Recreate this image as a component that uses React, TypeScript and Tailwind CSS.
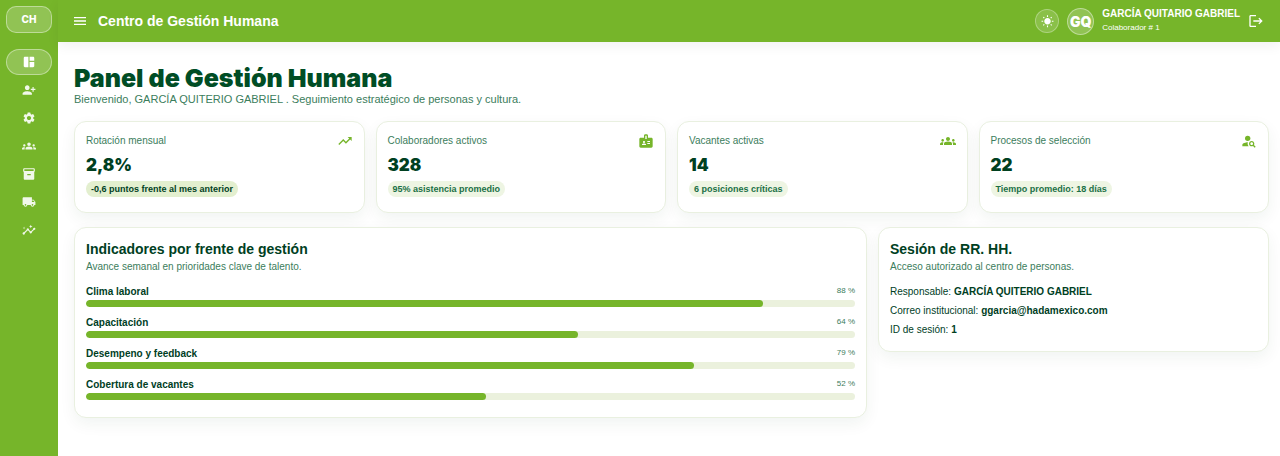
import type { ReactNode } from "react";
import type { IconType } from "react-icons";
import {
  MdBadge,
  MdGroups,
  MdInsights,
  MdInventory2,
  MdLocalShipping,
  MdLogout,
  MdMenu,
  MdPersonAddAlt1,
  MdPersonSearch,
  MdSettings,
  MdSpaceDashboard,
  MdTrendingUp,
  MdWbSunny,
} from "react-icons/md";

const navItems: { label: string; icon: IconType }[] = [
  { label: "Panel", icon: MdSpaceDashboard },
  { label: "Altas", icon: MdPersonAddAlt1 },
  { label: "Ajustes", icon: MdSettings },
  { label: "Equipos", icon: MdGroups },
  { label: "Inventario", icon: MdInventory2 },
  { label: "Envíos", icon: MdLocalShipping },
  { label: "Reportes", icon: MdInsights },
];

const stats = [
  { label: "Rotación mensual", value: "2,8%", note: "-0,6 puntos frente al mes anterior", icon: MdTrendingUp, chip: "bg-[#e3efcf] text-[#00401f]" },
  { label: "Colaboradores activos", value: "328", note: "95% asistencia promedio", icon: MdBadge, chip: "bg-[#eef5e3] text-[#1b7046]" },
  { label: "Vacantes activas", value: "14", note: "6 posiciones críticas", icon: MdGroups, chip: "bg-[#eef5e3] text-[#1b7046]" },
  { label: "Procesos de selección", value: "22", note: "Tiempo promedio: 18 días", icon: MdPersonSearch, chip: "bg-[#eef5e3] text-[#1b7046]" },
];

const indicators = [
  { label: "Clima laboral", value: 88 },
  { label: "Capacitación", value: 64 },
  { label: "Desempeno y feedback", value: 79 },
  { label: "Cobertura de vacantes", value: 52 },
];

const session = [
  { label: "Responsable:", value: "GARCÍA QUITERIO GABRIEL" },
  { label: "Correo institucional:", value: "ggarcia@hadamexico.com" },
  { label: "ID de sesión:", value: "1" },
];

function Card({ className, children }: { className: string; children: ReactNode }) {
  return (
    <section
      className={`rounded-xl border border-[#e9f0e0] bg-white px-[11px] shadow-[0_6px_16px_rgba(0,64,32,0.06)] ${className}`}
    >
      {children}
    </section>
  );
}

function Sidebar() {
  return (
    <aside className="flex w-[58px] shrink-0 flex-col items-center bg-[#76b52a] pt-1.5 text-white">
      <div className="flex h-[27px] w-[46px] items-center justify-center rounded-[10px] border border-white/40 bg-white/20 font-[Inter,sans-serif] text-[10px] font-extrabold">
        CH
      </div>
      <nav className="mt-4 flex flex-col gap-0.5">
        {navItems.map((item, i) => (
          <button
            key={item.label}
            aria-label={item.label}
            className={
              i === 0
                ? "flex h-[26px] w-[46px] items-center justify-center rounded-full border border-white/40 bg-white/20"
                : "flex h-[26px] w-[46px] items-center justify-center rounded-full text-white/90"
            }
          >
            <item.icon size={14} />
          </button>
        ))}
      </nav>
    </aside>
  );
}

function Header() {
  return (
    <header className="flex h-[42px] items-center bg-[#76b52a] pr-4 pl-[14px] text-white shadow-[0_4px_12px_rgba(0,0,0,0.06)]">
      <button aria-label="Abrir menú">
        <MdMenu size={16} />
      </button>
      <p className="ml-2.5 text-[14px] font-bold">Centro de Gestión Humana</p>
      <button
        aria-label="Cambiar tema"
        className="ml-auto flex size-6 items-center justify-center rounded-full border border-white/30 bg-white/15"
      >
        <MdWbSunny size={13} />
      </button>
      <div className="ml-2 flex size-[27px] items-center justify-center rounded-full border border-white/40 bg-white/20 font-[Inter,sans-serif] text-[14px] font-black">
        GQ
      </div>
      <div className="mr-2 ml-2">
        <p className="text-[10px] leading-[14px] font-bold">GARCÍA QUITARIO GABRIEL</p>
        <p className="text-[8px] leading-[14px]">Colaborador # 1</p>
      </div>
      <button aria-label="Cerrar sesión">
        <MdLogout size={16} />
      </button>
    </header>
  );
}

export default function App() {
  return (
    <div className="flex min-h-screen bg-white font-['Liberation_Sans',Arial,sans-serif] text-[#00401f]">
      <Sidebar />
      <div className="min-w-0 flex-1">
        <Header />
        <main className="pt-6 pr-[11px] pb-6 pl-4">
          <h1 className="font-[Inter,sans-serif] text-[25px] leading-[25px] font-black text-[#004d25]">
            Panel de Gestión Humana
          </h1>
          <p className="text-[11px] leading-4 text-[#3b7d5c]">
            Bienvenido, GARCÍA QUITERIO GABRIEL . Seguimiento estratégico de personas y cultura.
          </p>

          <div className="mt-[14px] grid grid-cols-12 items-start gap-x-[11px] gap-y-[14px]">
            {stats.map(s => (
              <Card key={s.label} className="col-span-3 pt-[11px] pb-[15px]">
                <div className="flex items-center justify-between">
                  <h2 className="text-[10px] leading-4 text-[#3b7d5c]">{s.label}</h2>
                  <s.icon size={16} className="text-[#76b52a]" />
                </div>
                <p className="mt-1 font-[Inter,sans-serif] text-[17px] leading-6 font-black">{s.value}</p>
                <p className={`mt-1 w-fit rounded-full px-[5px] text-[9px] leading-4 font-bold ${s.chip}`}>
                  {s.note}
                </p>
              </Card>
            ))}

            <Card className="col-span-8 pt-3 pb-[17px]">
              <h2 className="text-[14px] leading-[19px] font-bold">Indicadores por frente de gestión</h2>
              <p className="text-[10px] leading-4 text-[#3b7d5c]">Avance semanal en prioridades clave de talento.</p>
              <div className="mt-2.5 flex flex-col gap-[9px]">
                {indicators.map(ind => (
                  <div key={ind.label}>
                    <div className="mb-px flex items-start justify-between leading-[14px]">
                      <span className="text-[10px] font-bold">{ind.label}</span>
                      <span className="text-[8px] leading-3 text-[#3b7d5c]">{ind.value} %</span>
                    </div>
                    <div className="h-[7px] overflow-hidden rounded-full bg-[#ebf1dd]">
                      <div className="h-full rounded-full bg-[#76b52a]" style={{ width: `${ind.value}%` }} />
                    </div>
                  </div>
                ))}
              </div>
            </Card>

            <Card className="col-span-4 pt-3 pb-[14px]">
              <h2 className="text-[14px] leading-[19px] font-bold">Sesión de RR. HH.</h2>
              <p className="text-[10px] leading-4 text-[#3b7d5c]">Acceso autorizado al centro de personas.</p>
              <div className="mt-2.5 flex flex-col gap-[5px] text-[10px] leading-[14px]">
                {session.map(row => (
                  <p key={row.label}>
                    {row.label} <strong>{row.value}</strong>
                  </p>
                ))}
              </div>
            </Card>
          </div>
        </main>
      </div>
    </div>
  );
}
